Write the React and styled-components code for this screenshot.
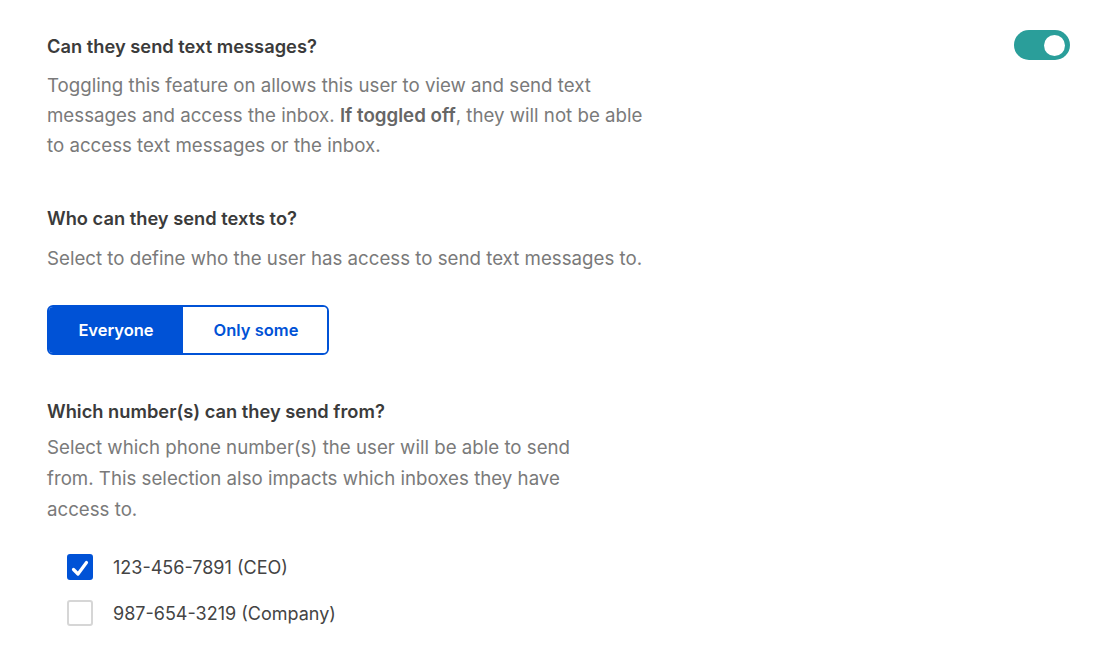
import React, { useState } from 'react';
import styled, { createGlobalStyle } from 'styled-components';

const GlobalStyle = createGlobalStyle`
  body {
    margin: 0;
    background: #fff;
    font-family: Inter, "Noto Sans", sans-serif;
  }
`;

const Page = styled.div`
  width: 1100px;
  height: 662px;
  box-sizing: border-box;
  padding: 33px 30px 0 47px;
  display: flex;
  flex-direction: column;
`;

const HeaderRow = styled.div`
  display: flex;
  justify-content: space-between;
  align-items: flex-start;
`;

const Title = styled.h3`
  margin: ${(p) => p.top || 0}px 0 0;
  font-size: 18.3px;
  line-height: 26px;
  font-weight: 600;
  color: #3b3b3b;
`;

const Body = styled.p`
  margin: ${(p) => p.top || 0}px 0 0;
  font-size: 18.7px;
  line-height: ${(p) => p.lh || 30}px;
  color: #7a7a7a;
  b {
    font-weight: 600;
    color: #666;
  }
`;

const Toggle = styled.button`
  width: 56px;
  height: 30px;
  margin-top: -3px;
  border: none;
  border-radius: 15px;
  background: ${(p) => (p.on ? '#2a9e9a' : '#ccc')};
  padding: 0 5px;
  display: flex;
  align-items: center;
  justify-content: ${(p) => (p.on ? 'flex-end' : 'flex-start')};
  cursor: pointer;
  &::after {
    content: '';
    width: 21px;
    height: 21px;
    border-radius: 50%;
    background: #fff;
  }
`;

const Segmented = styled.div`
  margin-top: 31px;
  display: flex;
  width: 282px;
  height: 50px;
  box-sizing: border-box;
  border: 2px solid #0052d6;
  border-radius: 6px;
  overflow: hidden;
`;

const Segment = styled.button`
  flex: 0 0 ${(p) => p.w}px;
  border: none;
  margin: 0;
  font-family: inherit;
  font-size: 16.5px;
  font-weight: 600;
  background: ${(p) => (p.active ? '#0052d6' : '#fff')};
  color: ${(p) => (p.active ? '#fff' : '#0052d6')};
  cursor: pointer;
`;

const CheckList = styled.div`
  margin-top: 29px;
  padding-left: 20px;
  display: flex;
  flex-direction: column;
  gap: 20px;
`;

const CheckRow = styled.label`
  display: flex;
  align-items: center;
  gap: 20px;
  font-size: 18px;
  color: #444;
  cursor: pointer;
`;

const Box = styled.span`
  width: 26px;
  height: 26px;
  box-sizing: border-box;
  border-radius: 3px;
  border: 2px solid ${(p) => (p.checked ? '#0052d6' : '#d6d6d6')};
  background: ${(p) => (p.checked ? '#0052d6' : '#fff')};
  display: flex;
  align-items: center;
  justify-content: center;
`;

const numbers = ['123-456-7891 (CEO)', '987-654-3219 (Company)'];

const App = () => {
  const [on, setOn] = useState(true);
  const [who, setWho] = useState('everyone');
  const [checked, setChecked] = useState([true, false]);

  const flip = (idx) => {
    setChecked(checked.map((c, i) => (i === idx ? !c : c)));
  };

  return (
    <React.Fragment>
      <GlobalStyle />
      <Page>
        <HeaderRow>
          <Title>Can they send text messages?</Title>
          <Toggle on={on ? 1 : 0} onClick={() => setOn(!on)} />
        </HeaderRow>
        <Body top={11}>
          Toggling this feature on allows this user to view and send text
          <br />
          messages and access the inbox. <b>If toggled off</b>, they will not be able
          <br />
          to access text messages or the inbox.
        </Body>

        <Title top={44}>Who can they send texts to?</Title>
        <Body top={13}>Select to define who the user has access to send text messages to.</Body>

        <Segmented>
          <Segment w={134} active={who === 'everyone' ? 1 : 0} onClick={() => setWho('everyone')}>
            Everyone
          </Segment>
          <Segment w={146} active={who === 'some' ? 1 : 0} onClick={() => setWho('some')}>
            Only some
          </Segment>
        </Segmented>

        <Title top={43}>Which number(s) can they send from?</Title>
        <Body top={8} lh={31}>
          Select which phone number(s) the user will be able to send
          <br />
          from. This selection also impacts which inboxes they have
          <br />
          access to.
        </Body>

        <CheckList>
          {numbers.map((n, idx) => (
            <CheckRow key={idx} onClick={() => flip(idx)}>
              <Box checked={checked[idx]}>
                {checked[idx] && (
                  <svg width="22" height="22" viewBox="0 0 22 22">
                    <path d="M4.5 13.5 L9 18 L17.5 6.5" fill="none" stroke="#fff" strokeWidth="3.2" strokeLinecap="round" strokeLinejoin="round" />
                  </svg>
                )}
              </Box>
              {n}
            </CheckRow>
          ))}
        </CheckList>
      </Page>
    </React.Fragment>
  );
};

export default App;
